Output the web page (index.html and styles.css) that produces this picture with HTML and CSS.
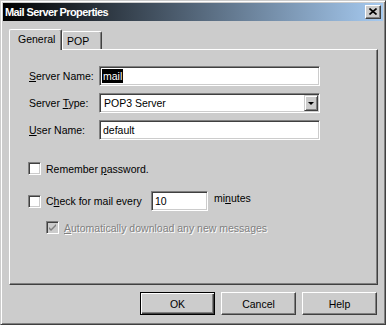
FILE: index.html
```html
<!DOCTYPE html>
<html lang="en">
<head>
    <meta charset="UTF-8">
    <title>Mail Server Properties</title>
    <link rel="stylesheet" href="styles.css">
</head>
<body>
    <div class="window">
        <div class="titlebar">
            <span class="title">Mail Server Properties</span>
            <span class="close-btn">
                <svg width="8" height="7" viewBox="0 0 8 7"><path d="M0.5 0.5 L7.5 6.5 M7.5 0.5 L0.5 6.5" stroke="#000" stroke-width="1.6" fill="none"/></svg>
            </span>
        </div>
        <div class="dialog-body">
            <div class="tabs">
                <div class="tab active">General</div>
                <div class="tab">POP</div>
            </div>
            <div class="panel">
                <div class="field-row">
                    <span class="field-label"><u>S</u>erver Name:</span>
                    <div class="textbox"><span class="selected">mail</span></div>
                </div>
                <div class="field-row">
                    <span class="field-label">Server <u>T</u>ype:</span>
                    <div class="textbox combo">
                        <span class="combo-text">POP3 Server</span>
                        <span class="combo-btn"><span class="arrow"></span></span>
                    </div>
                </div>
                <div class="field-row">
                    <span class="field-label"><u>U</u>ser Name:</span>
                    <div class="textbox">default</div>
                </div>

                <div class="check-row remember">
                    <span class="checkbox"></span>
                    <span>Remember <u>p</u>assword.</span>
                </div>
                <div class="check-row every">
                    <span class="checkbox"></span>
                    <span class="every-label">C<u>h</u>eck for mail every</span>
                    <div class="textbox minutes-box">10</div>
                    <span class="minutes-label">mi<u>n</u>utes</span>
                </div>
                <div class="check-row auto disabled">
                    <span class="checkbox checked">
                        <svg width="7" height="7" viewBox="0 0 7 7"><path d="M0 3 L2 5 L7 0 L7 2 L2 7 L0 5 Z" fill="#808080"/></svg>
                    </span>
                    <span><u>A</u>utomatically download any new messages</span>
                </div>
            </div>
            <div class="buttons">
                <div class="btn default">OK</div>
                <div class="btn">Cancel</div>
                <div class="btn">Help</div>
            </div>
        </div>
    </div>
</body>
</html>
```

FILE: styles.css
```css
body {
    margin: 0;
    padding: 0;
    background-color: #cccccc;
    font-family: "Liberation Sans", Arial, sans-serif;
    font-size: 10.5px;
    color: #000;
}

.window {
    width: 386px;
    height: 325px;
    box-sizing: border-box;
    background-color: #cccccc;
    border: 1px solid;
    border-color: #cccccc #404040 #404040 #cccccc;
    box-shadow: inset 1px 1px 0 #fff, inset -1px -1px 0 #808080;
    padding: 2px;
    display: flex;
    flex-direction: column;
}

.titlebar {
    height: 18px;
    background: linear-gradient(to right, #000 0%, #a6caf0 100%);
    display: flex;
    align-items: center;
    padding-left: 2px;
}

.title {
    color: #fff;
    font-weight: bold;
    font-size: 11px;
    letter-spacing: -0.6px;
}

.close-btn {
    margin-left: auto;
    margin-right: 2px;
    width: 16px;
    height: 14px;
    box-sizing: border-box;
    background-color: #cccccc;
    border: 1px solid;
    border-color: #fff #404040 #404040 #fff;
    box-shadow: inset -1px -1px 0 #808080;
    display: flex;
    align-items: center;
    justify-content: center;
    padding-bottom: 1px;
}

.dialog-body {
    flex: 1;
    padding: 8px 5px 0 6px;
    display: flex;
    flex-direction: column;
}

.tabs {
    display: flex;
    align-items: flex-end;
    height: 20px;
    position: relative;
    z-index: 1;
}

.tab {
    height: 18px;
    box-sizing: border-box;
    border-top: 1px solid #fff;
    border-left: 1px solid #fff;
    border-right: 1px solid #404040;
    border-radius: 2px 2px 0 0;
    box-shadow: inset -1px 0 0 #808080;
    background-color: #cccccc;
    padding: 3px 0 0 4px;
    width: 40px;
}

.tab.active {
    height: 21px;
    width: 53px;
    margin-bottom: -1px;
    padding: 3px 0 0 8px;
}

.panel {
    height: 236px;
    box-sizing: border-box;
    border: 1px solid;
    border-color: #fff #404040 #404040 #fff;
    box-shadow: inset -1px -1px 0 #808080;
    padding: 16px 0 0 19px;
    display: flex;
    flex-direction: column;
}

.field-row {
    display: flex;
    align-items: center;
    height: 20px;
    margin-bottom: 7px;
}

.field-label {
    width: 70px;
}

.textbox {
    width: 221px;
    height: 20px;
    box-sizing: border-box;
    background-color: #fff;
    border: 1px solid;
    border-color: #808080 #fff #fff #808080;
    box-shadow: inset 1px 1px 0 #404040, inset -1px -1px 0 #cccccc;
    padding: 0 3px;
    display: flex;
    align-items: center;
}

.selected {
    background-color: #000;
    color: #fff;
    line-height: 14px;
    margin-left: -1px;
    padding: 0 1px;
}

.combo {
    padding-right: 1px;
    padding-left: 4px;
}

.combo-text {
    flex: 1;
}

.combo-btn {
    width: 14px;
    height: 16px;
    box-sizing: border-box;
    background-color: #cccccc;
    border: 1px solid;
    border-color: #cccccc #404040 #404040 #cccccc;
    box-shadow: inset 1px 1px 0 #fff, inset -1px -1px 0 #808080;
    display: flex;
    align-items: center;
    justify-content: center;
}

.arrow {
    width: 0;
    height: 0;
    border-left: 3px solid transparent;
    border-right: 3px solid transparent;
    border-top: 3px solid #000;
}

.check-row {
    display: flex;
    align-items: center;
    margin-left: -1px;
}

.check-row.remember {
    height: 13px;
    margin-top: 15px;
}

.check-row.every {
    height: 20px;
    margin-top: 16px;
}

.check-row.auto {
    height: 13px;
    margin-top: 10px;
    margin-left: 17px;
}

.checkbox {
    width: 13px;
    height: 13px;
    box-sizing: border-box;
    background-color: #fff;
    border: 1px solid;
    border-color: #808080 #fff #fff #808080;
    box-shadow: inset 1px 1px 0 #404040, inset -1px -1px 0 #cccccc;
    margin-right: 5px;
    display: flex;
    align-items: center;
    justify-content: center;
    flex-shrink: 0;
}

.checkbox.checked {
    background-color: #cccccc;
}

.every-label {
    width: 105px;
}

.minutes-box {
    width: 57px;
}

.minutes-label {
    margin-left: 6px;
    align-self: flex-start;
    margin-top: 1px;
}

.disabled {
    color: #808080;
    text-shadow: 1px 1px 0 #fff;
}

.buttons {
    display: flex;
    justify-content: flex-end;
    gap: 6px;
    margin-top: 7px;
    padding-right: 1px;
}

.btn {
    width: 75px;
    height: 23px;
    box-sizing: border-box;
    border: 1px solid;
    border-color: #fff #404040 #404040 #fff;
    box-shadow: inset -1px -1px 0 #808080;
    display: flex;
    align-items: center;
    justify-content: center;
}

.btn.default {
    border: 1px solid #000;
    box-shadow: inset 1px 1px 0 #fff, inset -1px -1px 0 #404040, inset -2px -2px 0 #808080;
}
```
